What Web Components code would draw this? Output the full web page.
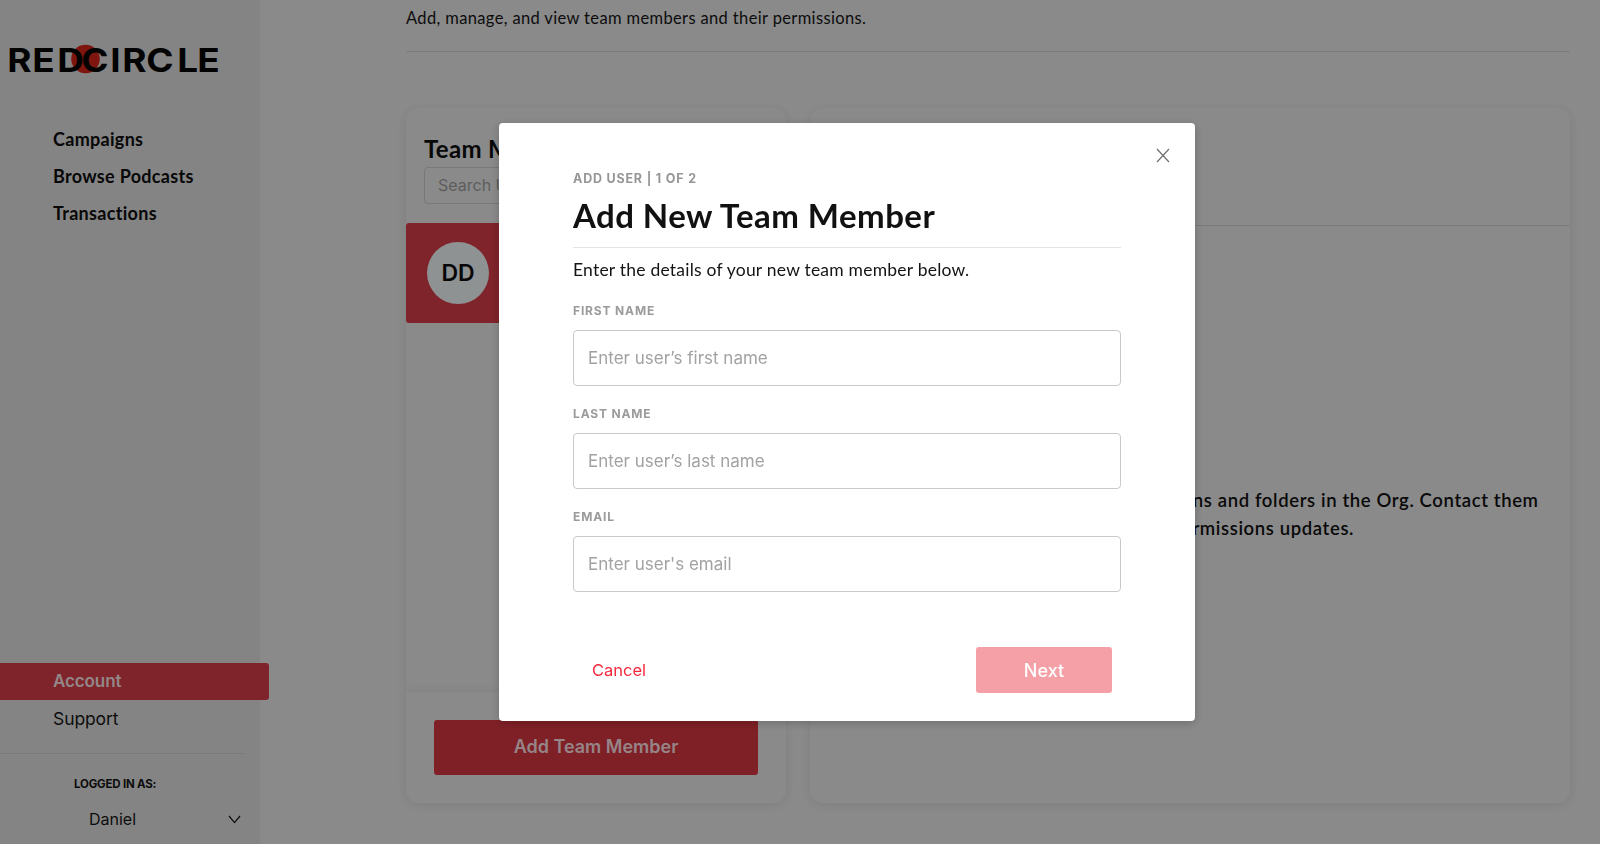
<!DOCTYPE html>
<html lang="en">
<head>
<meta charset="utf-8">
<title>Team members</title>
<style>
html,body{margin:0;height:100%;overflow:hidden;background:#b8b8b8;font-family:Lato,"Liberation Sans",sans-serif;color:#000}
</style>
</head>
<body>
<rc-app>
  <rc-sidebar slot="side">
    <rc-logo></rc-logo>
    <rc-nav-item strong>Campaigns</rc-nav-item>
    <rc-nav-item strong>Browse Podcasts</rc-nav-item>
    <rc-nav-item strong>Transactions</rc-nav-item>
    <rc-nav-item slot="bottom" active>Account</rc-nav-item>
    <rc-nav-item slot="bottom">Support</rc-nav-item>
  </rc-sidebar>
  <rc-team-page></rc-team-page>
</rc-app>
<rc-modal>
  <rc-field label="FIRST NAME" placeholder="Enter user’s first name"></rc-field>
  <rc-field label="LAST NAME" placeholder="Enter user’s last name"></rc-field>
  <rc-field label="EMAIL" placeholder="Enter user's email"></rc-field>
</rc-modal>
<script>
function def(name, css, html){
  customElements.define(name, class extends HTMLElement{
    constructor(){super();const r=this.attachShadow({mode:'open'});
      r.innerHTML='<style>'+css+'</style>'+(typeof html==='function'?'':html);}
    connectedCallback(){
      if(typeof html==='function'){
        this.shadowRoot.innerHTML='<style>'+css+'</style>'+html(this);
      }
    }
  });
}
const GEO='Lato,"Liberation Sans",sans-serif';
const DM='"Inter","Liberation Sans",sans-serif';

def('rc-app',`
  :host{display:flex;width:1600px;height:844px}
`,`<slot name="side"></slot><slot></slot>`);

def('rc-logo',`
  :host{display:block;height:121px;flex:none}
  svg{display:block}
  text{font:700 33px ${DM};fill:#050505}
`,`<svg width="230" height="121" viewBox="0 0 230 121" role="img" aria-label="RedCircle">
    <circle cx="85.5" cy="59" r="14.3" fill="#a81c14"/>
    <text transform="scale(1.12 1)" y="72" x="6.4 28.8 51.1 72.6 98.4 109.1 130.6 158.2 176.1">REDCIRCLE</text>
  </svg>`);

def('rc-nav-item',`
  :host{display:block;height:37px;box-sizing:border-box;padding-left:53px;font:400 17.5px/37px ${DM};color:#111;letter-spacing:-.1px}
  :host([strong]){font:700 18px/37px ${GEO};letter-spacing:.3px;color:#0b0b0b}
  :host([active]){background:#aa3039;color:#c5b4b6;font-weight:600;font-size:17px;line-height:36px;border-radius:0 3px 3px 0;margin-right:-9px;position:relative}
`,`<slot></slot>`);

def('rc-sidebar',`
  :host{display:flex;flex-direction:column;width:260px;height:844px;box-sizing:border-box;background:#b1b1b1;flex:none}
  .grow{flex:1}
  .bottom{display:flex;flex-direction:column}
  .line{height:1px;background:#a3a3a3;margin:16px 15px 0 0}
  .who{font:700 11.5px/16px ${DM};color:#111;margin:22px 0 0 74px;letter-spacing:-.2px}
  .me{display:flex;align-items:center;height:24px;margin:15px 19px 13px 89px;font:400 16px/24px ${DM};color:#111;justify-content:space-between}
  svg{display:block}
`,`<slot></slot><div class="grow"></div>
  <div class="bottom"><slot name="bottom"></slot></div>
  <div class="line"></div>
  <div class="who">LOGGED IN AS:</div>
  <div class="me"><span>Daniel</span>
    <svg width="13" height="9" viewBox="0 0 13 9" fill="none" stroke="#111" stroke-width="1.2"><path d="M1 1l5.5 6.6L12 1"/></svg>
  </div>`);

def('rc-team-page',`
  :host{display:flex;flex-direction:column;flex:1;min-width:0;padding:0 30px 41px 146px;box-sizing:border-box;height:844px}
  .intro{font:400 16.5px/20px ${GEO};color:#111;padding-top:8px;letter-spacing:.36px;box-sizing:border-box;border-bottom:1px solid #a6a6a6;flex:none;height:52px}
  .cards{flex:1;display:flex;gap:24px;margin-top:56px;min-height:0}
  .card{background:#b8b8b8;border-radius:13px;box-shadow:0 2px 10px rgba(0,0,0,.08);display:flex;flex-direction:column;overflow:hidden}
  .left{width:380px;flex:none}
  .right{flex:1}
  .team{padding:25px 18px 0;font:700 24px/32px ${GEO};color:#0b0b0b;letter-spacing:.3px}
  .search{margin:2px 18px 19px;height:37px;box-sizing:border-box;border:1px solid #a0a0a0;border-radius:4px;padding-left:13px;font:400 16px/35px ${DM};color:#7d7d7d}
  .row{display:flex;align-items:center;height:100px;background:#aa3039;border-radius:3px;padding-left:21px;flex:none}
  .av{width:62px;height:62px;border-radius:50%;background:#bfc3c4;display:flex;align-items:center;justify-content:center;font:600 23px ${DM};color:#0a0a0a}
  .list{flex:1}
  .foot{height:111px;flex:none;box-sizing:border-box;padding:28px;box-shadow:0 -2px 8px rgba(0,0,0,.06)}
  .btn{height:55px;background:#aa2b34;border-radius:3px;display:flex;align-items:center;justify-content:center;font:600 18px/53px ${DM};color:#c8b2b4;padding-bottom:2px;box-sizing:border-box}
  .hd{height:117px;flex:none;border-bottom:1px solid #a3a3a3}
  .msg{padding:260px 0 0 32px;font:600 18.5px/28px ${GEO};color:#0d0d0d;letter-spacing:.62px;white-space:nowrap;text-indent:14px}
  .msg .l2{display:block;text-indent:0}
`,`<div class="intro">Add, manage, and view team members and their permissions.</div>
  <div class="cards">
    <div class="card left">
      <div class="team">Team Members</div>
      <div class="search">Search Users</div>
      <div class="row"><div class="av">DD</div></div>
      <div class="list"></div>
      <div class="foot"><div class="btn">Add Team Member</div></div>
    </div>
    <div class="card right">
      <div class="hd"></div>
      <div class="msg">Org Admins have access to all campaigns and folders in the Org. Contact them<span class="l2">with any questions, or to request any permissions updates.</span></div>
    </div>
  </div>`);

def('rc-field',`
  :host{display:block;margin-top:20px}
  label{display:block;font:700 12px/16px ${DM};letter-spacing:.85px;color:#9b9b9b}
  .in{margin-top:11px;height:56px;box-sizing:border-box;border:1px solid #c9c9c9;border-radius:4px;padding-left:14px;font:400 17px/54px ${DM};color:#a2a2a2;background:#fff}
`,el=>`<label>${el.getAttribute('label')}</label><div class="in">${el.getAttribute('placeholder')}</div>`);

def('rc-modal',`
  :host{position:fixed;inset:0;background:rgba(0,0,0,.25);display:flex;align-items:center;justify-content:flex-start;padding-left:499px;box-sizing:border-box}
  .box{position:relative;width:696px;height:598px;box-sizing:border-box;background:#fff;border-radius:4px;padding:48px 74px 0;box-shadow:0 2px 8px rgba(0,0,0,.2);display:flex;flex-direction:column}
  .x{position:absolute;right:25px;top:25px;display:block}
  .step{font:700 12.5px/16px ${DM};letter-spacing:.8px;color:#969696}
  h1{margin:8px 0 0;font:700 33px/40px ${GEO};color:#111;letter-spacing:.45px;padding-bottom:12px;border-bottom:1px solid #e4e4e4}
  p{margin:10px 0 1px;font:400 17.5px/24px ${GEO};color:#141414;letter-spacing:.22px}
  .acts{margin-top:auto;margin-bottom:28px;display:flex;justify-content:space-between;align-items:center;padding:0 9px 0 19px}
  .cancel{font:400 16.5px ${DM};color:#f5283e}
  .next{width:136px;height:46px;border-radius:3px;background:#f5a0a6;color:#fff;font:500 18px/47px ${DM};text-align:center}
`,`<div class="box">
    <svg class="x" width="14" height="15" viewBox="0 0 14 15" fill="none" stroke="#6f6f6f" stroke-width="1.2"><path d="M1 1l12 13M13 1L1 14"/></svg>
    <div class="step">ADD USER | 1 OF 2</div>
    <h1>Add New Team Member</h1>
    <p>Enter the details of your new team member below.</p>
    <slot></slot>
    <div class="acts"><span class="cancel">Cancel</span><span class="next">Next</span></div>
  </div>`);
</script>
</body>
</html>
